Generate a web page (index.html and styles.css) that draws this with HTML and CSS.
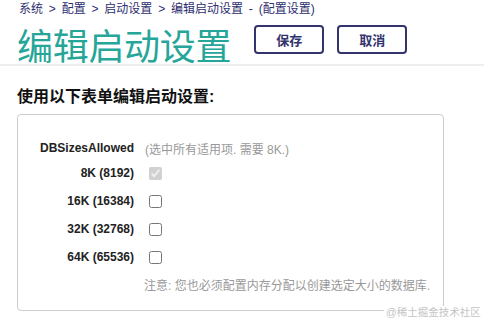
FILE: index.html
```html
<!DOCTYPE html>
<html lang="zh">
<head>
    <meta charset="UTF-8">
    <title>编辑启动设置</title>
    <link rel="stylesheet" href="styles.css">
</head>
<body>

    <!-- Cabecera -->
    <header class="cabecera">
        <div class="migas">系统 &gt; 配置 &gt; 启动设置 &gt; 编辑启动设置 - (配置设置)</div>
        <div class="titulo-fila">
            <h1>编辑启动设置</h1>
            <button class="btn">保存</button>
            <button class="btn">取消</button>
        </div>
    </header>

    <!-- Formulario -->
    <section class="contenido">
        <h2>使用以下表单编辑启动设置:</h2>
        <div class="caja">
            <div class="fila">
                <span class="etiqueta">DBSizesAllowed</span>
                <span class="ayuda">(选中所有适用项. 需要 8K.)</span>
            </div>
            <div class="fila">
                <span class="etiqueta">8K (8192)</span>
                <input type="checkbox" checked disabled>
            </div>
            <div class="fila">
                <span class="etiqueta">16K (16384)</span>
                <input type="checkbox">
            </div>
            <div class="fila">
                <span class="etiqueta">32K (32768)</span>
                <input type="checkbox">
            </div>
            <div class="fila">
                <span class="etiqueta">64K (65536)</span>
                <input type="checkbox">
            </div>
            <p class="nota">注意: 您也必须配置内存分配以创建选定大小的数据库.</p>
        </div>
    </section>

    <div class="marca">@稀土掘金技术社区</div>

</body>
</html>
```

FILE: styles.css
```css
body {
    font-family: "Liberation Sans", Arial, "Noto Sans CJK SC", sans-serif;
    margin: 0;
    background-color: white;
    color: #222;
    overflow: hidden;
}
.cabecera {
    padding: 2px 17px 0 17px;
    border-bottom: 2px solid #eeeeee;
    height: 66px;
    box-sizing: border-box;
}
.migas {
    font-size: 12px;
    color: #2e2e70;
    padding-left: 2px;
    line-height: 14px;
    word-spacing: 2.5px;
}
.titulo-fila {
    display: flex;
    align-items: flex-start;
    margin-top: 12px;
}
.titulo-fila h1 {
    margin: 0 23px 0 0;
    font-size: 36px;
    font-weight: normal;
    color: #25a699;
    line-height: 40px;
    letter-spacing: -0.3px;
}
.btn {
    width: 70px;
    height: 29px;
    margin: -3px 13px 0 0;
    background-color: white;
    border: 2px solid #33336e;
    border-radius: 4px;
    color: #33336e;
    font-family: "Noto Sans CJK SC", sans-serif;
    font-weight: bold;
    font-size: 13px;
    cursor: pointer;
}
.contenido {
    padding: 0 17px;
}
.contenido h2 {
    font-size: 16px;
    margin: 20px 0 6px 0;
    line-height: 22px;
    color: #111;
}
.caja {
    border: 1px solid #cccccc;
    border-radius: 4px;
    width: 427px;
    height: 197px;
    box-sizing: border-box;
    padding-top: 22px;
}
.fila {
    display: flex;
    align-items: center;
    height: 28px;
}
.fila:first-child {
    height: 22px;
}
.etiqueta {
    width: 116px;
    text-align: right;
    font-size: 12px;
    font-weight: bold;
    color: #222;
    margin-right: 11px;
}
.fila input {
    width: 13px;
    height: 13px;
    margin: 0 0 0 4px;
}
.ayuda {
    font-size: 12px;
    color: #999;
}
.nota {
    margin: 5px 0 0 126px;
    font-size: 12px;
    color: #999;
}
.marca {
    position: fixed;
    left: 384px;
    bottom: 3px;
    padding: 0 2px;
    font-size: 10.5px;
    line-height: 13px;
    color: #c4c4c4;
    background-color: white;
}
```
